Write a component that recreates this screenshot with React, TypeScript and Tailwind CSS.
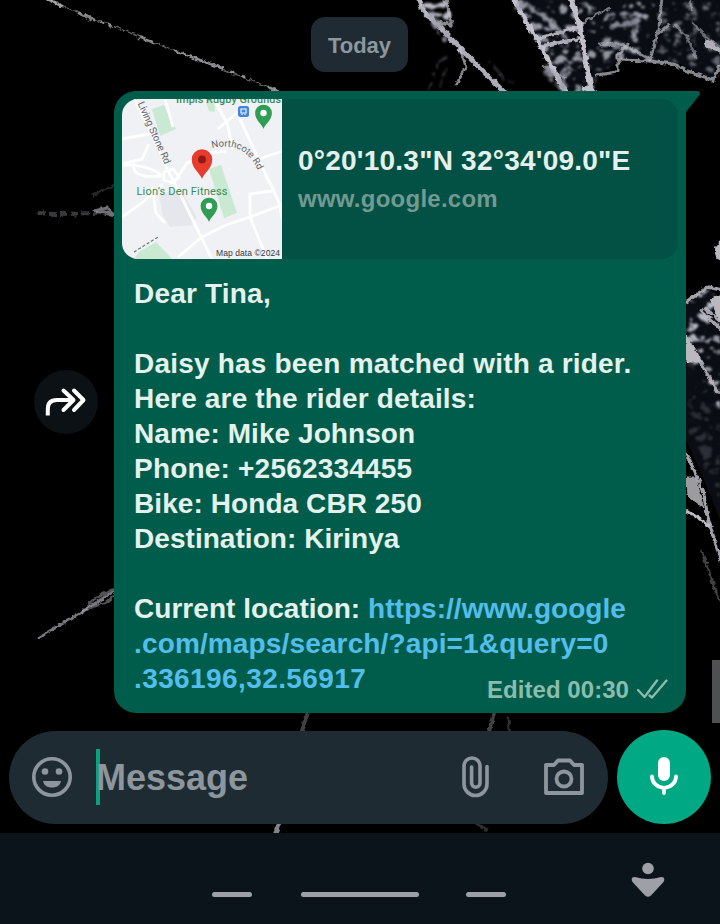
import React from "react";

const FONT = "font-['Liberation_Sans',Arial,sans-serif]";

function Wallpaper() {
  return (
    <svg className="absolute inset-0" width="720" height="833" viewBox="0 0 720 833" fill="none" aria-hidden="true">
      <defs>
        <filter id="rough" x="0" y="0" width="720" height="833" filterUnits="userSpaceOnUse">
          <feTurbulence type="fractalNoise" baseFrequency="0.13" numOctaves="3" seed="8" result="n" />
          <feDisplacementMap in="SourceGraphic" in2="n" scale="9" xChannelSelector="R" yChannelSelector="G" result="d" />
          <feColorMatrix in="n" type="matrix" values="0 0 0 0 1  0 0 0 0 1  0 0 0 0 1  5 4 0 0 -3.6" result="m" />
          <feComposite in="d" in2="m" operator="in" />
          <feGaussianBlur stdDeviation="0.8" />
        </filter>
        <filter id="soft" x="0" y="0" width="720" height="833" filterUnits="userSpaceOnUse">
          <feTurbulence type="fractalNoise" baseFrequency="0.2" numOctaves="2" seed="3" result="n" />
          <feDisplacementMap in="SourceGraphic" in2="n" scale="5" xChannelSelector="R" yChannelSelector="G" />
          <feGaussianBlur stdDeviation="0.75" />
        </filter>
        <filter id="specks" x="0" y="0" width="720" height="833" filterUnits="userSpaceOnUse">
          <feTurbulence type="turbulence" baseFrequency="0.07 0.09" numOctaves="3" seed="21" result="n" />
          <feColorMatrix in="n" type="matrix" values="0 0 0 0 0.48  0 0 0 0 0.49  0 0 0 0 0.56  7 4 0 0 -3.9" result="m" />
          <feComposite in="m" in2="SourceGraphic" operator="in" />
          <feGaussianBlur stdDeviation="0.8" />
        </filter>
      </defs>

      {/* dark glass facets */}
      <g fill="#10141f" opacity="0.65">
        <path d="M510 0H720V68L712 80L680 64L620 59L600 75L590 95L565 91L540 45Z" />
        <path d="M686 304L708 288L720 300V520L700 470L686 440Z" />
      </g>
      <g filter="url(#specks)" fill="#fff">
        <path d="M420 0L452 0L450 32L430 18Z" />
        <path d="M512 0H655L648 60H618L600 75L592 95H565L540 45Z" opacity="0.8" />
        <path d="M660 0H720V76L712 80L680 64L650 60Z" opacity="0.5" />
        <path d="M686 300L712 286L720 310V410L686 350Z" />
        <path d="M688 352L720 410V500L700 460L686 430Z" opacity="0.2" />
      </g>

      {/* hairline crack upper left */}
      <g filter="url(#soft)" stroke="#a3a3a5" strokeLinecap="round">
        <path d="M40 -4L62 6" strokeWidth="2.6" />
        <path d="M62 6L278 91" strokeWidth="1.3" opacity="0.6" />
        <path d="M80 14L94 20M101 22L102 22.4M109 25L111 26M140 38L154 43M175 51L222 68M231 72L233 73M242 76L244 77M270 88L276 90" strokeWidth="2.8" opacity="0.8" />
      </g>

      {/* main cracks */}
      <g filter="url(#soft)" stroke="#c1c0cb" strokeLinecap="round" strokeLinejoin="round">
        <path d="M418 -4L422 9L458 46L486 74L503 91" strokeWidth="5" opacity="0.9" />
        <path d="M420 0L430 20M446 0L452 25L436 22" strokeWidth="3.4" opacity="0.7" />
        <path d="M460 49L466 67L456 85" strokeWidth="2.6" opacity="0.7" />
        <path d="M512 -3L539 43L565 91" strokeWidth="4.8" />
        <path d="M570 -3L580 26L592 95" strokeWidth="5" />
        <path d="M541 46L578 39M540 38L582 26" strokeWidth="3.5" opacity="0.9" />
        <path d="M577 30L588 19M588 19L610 8M545 67L565 78" strokeWidth="2.4" opacity="0.6" />
        <path d="M586 88L595 94" strokeWidth="6" />
        <path d="M662 -3L659 27L650 60L622 44L600 45M660 32L669 24" strokeWidth="3" opacity="0.65" />
        <path d="M597 75L618 72V54L628 44M620 60L650 61L674 64L682 69L713 80L720 66" strokeWidth="3" opacity="0.7" />
        <path d="M691 0V10M692 22L709 40L720 47M675 25L688 38L696 58" strokeWidth="2.6" opacity="0.5" />
        <path d="M707 43L720 51" strokeWidth="6" opacity="0.9" />
      </g>
      <g filter="url(#rough)" stroke="#9b9daa" opacity="0.85">
        <path d="M515 6Q545 5 570 45M605 17Q628 10 648 18M610 25Q630 27 640 20M604 45L628 47" strokeWidth="5" />
        <path d="M426 8L448 40M542 66L565 90M570 62L560 88" strokeWidth="7" />
        <path d="M430 90Q434 64 448 57M442 90Q440 75 448 69M490 62Q500 78 514 84" strokeWidth="2" opacity="0.5" />
      </g>

      {/* shards along both edges */}
      <g filter="url(#soft)" stroke="#bdbbc4" strokeLinejoin="round">
        <path d="M722 240Q712 247 717 258L722 261" fill="#bab9be" />
        <path d="M686 302L708 287L722 290V323L704 307M686 346L700 361L718 394M700 310L722 330" strokeWidth="3.4" opacity="0.85" />
        <path d="M686 336L698 354L700 362H686ZM710 300L722 295V324Z" fill="#bbb9bf" />
        <path d="M686 453L703 490L708 518L721 562" strokeWidth="3.2" opacity="0.85" />
        <path d="M686 478L696 478L704 509L687 496Z" fill="#b8b7bb" opacity="0.85" />
        <path d="M686 510L710 526" strokeWidth="2.8" />
        <path d="M701 550L720 602" strokeWidth="2.5" opacity="0.35" />
        <path d="M38 638L82 612L114 591" strokeWidth="3" stroke="#77777d" />
        <path d="M82 612L94 599L108 592L114 588M90 608L107 602L114 596" strokeWidth="2.6" opacity="0.45" />
        <path d="M38 213L55 214L98 213" strokeWidth="4" opacity="0.3" strokeDasharray="7 4" />
        <path d="M94 211L107 208L115 215L105 213Z" strokeWidth="3" opacity="0.6" />
        <path d="M92 196L114 185" strokeWidth="3" opacity="0.2" />
        <path d="M308 712L301 734M494 712L489 732" strokeWidth="4" opacity="0.35" />
        <path d="M281 820L274 836" strokeWidth="4.5" opacity="0.7" />
        <path d="M508 718L509 730M476 824L488 830" strokeWidth="3" opacity="0.25" />
      </g>
    </svg>
  );
}

function MapPin({ x, y, s, fill, dot }: { x: number; y: number; s: number; fill: string; dot: string }) {
  return (
    <g transform={`translate(${x} ${y}) scale(${s})`}>
      <path d="M0 0C-1-5-10-10-10-19A10 10 0 0 1 10-19C10-10 1-5 0 0Z" fill={fill} />
      <circle cx="0" cy="-19" r="3.8" fill={dot} />
    </g>
  );
}

function MapThumb() {
  return (
    <svg className="block h-[160px] w-[160px] shrink-0" viewBox="0 0 160 160" fontFamily="Roboto, sans-serif" fontWeight="400">
      <rect width="160" height="160" fill="#f0f1f4" />
      <path d="M37 97L58 89L75 118L70 126L48 128L41 117Z" fill="#e6e7ed" />
      <g fill="#c9e9d2">
        <path d="M30 10L42 6L54 30L38 37Z" />
        <path d="M84 3L92 1L93 13L87 12Z" />
        <path d="M87 70L99 66L115 114L102 119Z" />
        <path d="M12 160L17 153L34 143L50 160Z" />
      </g>
      <g stroke="#fff" fill="none" strokeWidth="2.8">
        <path d="M12 0L30 34L45 70L52 83L90 160" />
        <path d="M0 40L32 34M0 65L20 60L27 45M0 66Q24 65 40 76M0 118L20 104L41 85M30 88L34 114L43 124M12 64Q8 80 40 77M55 79L65 64L88 54L104 52" />
        <path d="M43 0L51 28M92 0L105 24L111 50M96 30L115 14L160 110M137 60L160 52M143 75L149 86L157 103L160 120M150 92L128 95V118L145 160M128 118L104 126L80 138L56 158M128 118L160 106" />
        <path d="M42 73L51 70L57 78L51 84L42 81Z" />
      </g>
      <path d="M12 153L36 138" stroke="#5e7f72" strokeWidth="1.2" strokeDasharray="3 2" />
      <text x="54" y="4" fontSize="10.800" fontWeight="500" textLength="105" fill="#388c58">Impis Rugby Grounds</text>
      <text transform="translate(15.500 4.500) rotate(66)" fontSize="10" textLength="67" fill="#5f646a">Living Stone Rd</text>
      <path id="northcote" d="M90 49Q124 41 137 74" fill="none" />
      <text fontSize="9.5" fill="#5f646a"><textPath href="#northcote">Northcote Rd</textPath></text>
      <text x="14.500" y="96" fontSize="11" textLength="91" fill="#388c58">Lion’s Den Fitness</text>
      <rect x="116" y="7" width="11" height="11" rx="2.500" fill="#4285df" />
      <path d="M119 10H124V14H119ZM120 15V16M123 15V16" stroke="#fff" fill="none" strokeWidth="1.1" />
      <MapPin x={80} y={80} s={1.03} fill="#e83b2e" dot="#8c1a17" />
      <MapPin x={87} y={123} s={0.84} fill="#2f9e54" dot="#fff" />
      <MapPin x={141.5} y={30} s={0.84} fill="#2f9e54" dot="#fff" />
      <text x="94" y="157" fontSize="8.5" textLength="64" fill="#34383b" fontFamily="Liberation Sans, sans-serif">Map data ©2024</text>
    </svg>
  );
}

function Preview() {
  return (
    <div className="flex h-[160px] overflow-hidden rounded-[16px] bg-[#035044]">
      <MapThumb />
      <div className="flex flex-col pt-[44px] pl-4 whitespace-nowrap">
        <span className="text-[28px] leading-[36px] tracking-[0.23px] text-[#e5f0ec]">0°20'10.3"N 32°34'09.0"E</span>
        <span className="pt-[3px] text-[24px] leading-[34px] tracking-[0.25px] text-[#729a93]">www.google.com</span>
      </div>
    </div>
  );
}

const LINES: { t: string; c: string }[] = [
  { t: "Dear Tina,", c: "tracking-[0.2px]" },
  { t: "", c: "" },
  { t: "Daisy has been matched with a rider.", c: "tracking-[0.2px]" },
  { t: "Here are the rider details:", c: "tracking-[0.16px]" },
  { t: "Name: Mike Johnson", c: "tracking-[0.06px]" },
  { t: "Phone: +2562334455", c: "tracking-[0.2px]" },
  { t: "Bike: Honda CBR 250", c: "tracking-[0.08px]" },
  { t: "Destination: Kirinya", c: "tracking-[0.05px]" },
  { t: "", c: "" },
];

function Bubble() {
  return (
    <div className="relative mt-[19px] ml-[114px] h-[622px] w-[572px] rounded-[22px] rounded-tr-none bg-[#005d4b] p-2">
      <svg className="absolute top-0 left-[571px]" width="16" height="24" viewBox="0 0 16 24">
        <path d="M0 0H13Q16 1 14.500 4L1 21H0Z" fill="#005d4b" />
      </svg>
      <Preview />
      <div className="px-3 pt-[17px] text-[28px] leading-[35px] whitespace-nowrap text-[#e4f1ec]">
        {LINES.map((l, i) => (
          <p key={i} className={`h-[35px] ${l.c}`}>{l.t}</p>
        ))}
        <p className="h-[35px] tracking-[0.04px]">Current location: <span className="text-[#53bdeb]">https://www.google</span></p>
        <p className="h-[35px] tracking-[0.14px] text-[#53bdeb]">.com/maps/search/?api=1&amp;query=0</p>
        <p className="h-[35px] tracking-[0.4px] text-[#53bdeb]">.336196,32.56917</p>
      </div>
      <div className="absolute right-[17px] bottom-[9px] flex items-center gap-2 text-[24px] leading-[28px] text-[#8bbcad]">
        <span className="whitespace-nowrap tracking-[0.05px]">Edited 00:30</span>
        <svg width="32" height="22" viewBox="0 0 32 22" fill="none" stroke="currentColor" strokeWidth="2.3" strokeLinecap="round" strokeLinejoin="round">
          <path d="M1 11L7.500 18L20 1.500M12.500 16.500L15 18.500L29.500 1.500" />
        </svg>
      </div>
    </div>
  );
}

function Composer() {
  return (
    <div className="mt-[17px] flex h-[94px] items-center pl-[9px]">
      <div className="flex h-[93px] w-[599px] items-center rounded-full bg-[#1f2b33] text-[#8c969c]">
        <svg className="ml-[23px] shrink-0" width="40" height="40" viewBox="0 0 40 40">
          <circle cx="20" cy="20" r="18.200" fill="none" stroke="currentColor" strokeWidth="3.6" />
          <circle cx="13" cy="14.500" r="3.300" fill="currentColor" />
          <circle cx="27" cy="14.500" r="3.300" fill="currentColor" />
          <path d="M11 24H29C28 28.500 25 30.500 20 30.500S12 28.500 11 24Z" fill="currentColor" />
        </svg>
        <div className="ml-[24px] h-[56px] w-[4px] bg-[#0aa17f]" />
        <span className="-ml-[4px] w-[366px] pt-[2px] text-[36px] leading-[56px]">Message</span>
        <svg className="shrink-0" width="27" height="42" viewBox="0 0 27 42" fill="none" stroke="currentColor" strokeWidth="3.6" strokeLinecap="round">
          <path d="M25 10.500V28A11.500 11.500 0 0 1 2 28V10A8 8 0 0 1 18 10V27A4.200 4.200 0 0 1 9.600 27V11" />
        </svg>
        <svg className="ml-[54px] shrink-0" width="42" height="38" viewBox="0 0 42 38" fill="none" stroke="currentColor" strokeWidth="3.8" strokeLinejoin="round">
          <path d="M3 7H11L15 2.500H27L31 7H39V35H3Z" />
          <circle cx="21" cy="21" r="7.500" />
        </svg>
      </div>
      <div className="ml-[9px] flex h-[94px] w-[94px] items-center justify-center rounded-full bg-[#00a884]">
        <svg width="28" height="40" viewBox="0 0 28 40">
          <rect x="8" y="0" width="12" height="24" rx="6" fill="#fff" />
          <path d="M2 19.500A12 11.300 0 0 0 26 19.500M14 31V36" fill="none" stroke="#fff" strokeWidth="3.8" strokeLinecap="round" />
        </svg>
      </div>
    </div>
  );
}

export default function App() {
  return (
    <div className={`relative h-[924px] w-[720px] overflow-hidden bg-black font-bold ${FONT}`}>
      <Wallpaper />
      <main className="relative h-[833px] pt-[17px]">
        <div className="ml-[311px] flex h-[55px] w-[97px] items-center justify-center rounded-[14px] bg-[#1f2a32] pt-[2px] text-[22px] text-[#8d979e]">Today</div>
        <Bubble />
        <button className="absolute top-[370px] left-[34px] flex h-[64px] w-[64px] items-center justify-center rounded-full bg-[#0b1115]" aria-label="Forward">
          <svg width="42" height="32" viewBox="0 0 42 32" fill="none" stroke="#fff" strokeWidth="4" strokeLinejoin="round">
            <path d="M2.800 29.500V23C2.800 16.500 6 14 12 14H28" />
            <path d="M18.500 4.500L28.500 14L18.500 24M29 4.500L38.500 14L29 24" strokeLinecap="round" />
          </svg>
        </button>
        <div className="absolute top-[660px] right-0 h-[63px] w-[8px] bg-[#4e5052]" />
        <Composer />
      </main>
      <nav className="relative flex h-[91px] bg-[#0b141b] text-[#9da0a7]">
        <div className="mt-[59px] ml-[212px] flex">
          <div className="h-[5px] w-[40px] rounded-full bg-[#9da0a7]" />
          <div className="ml-[49px] h-[5px] w-[118px] rounded-full bg-[#9da0a7]" />
          <div className="ml-[47px] h-[5px] w-[40px] rounded-full bg-[#9da0a7]" />
        </div>
        <svg className="mt-[29px] ml-[123px]" width="36" height="36" viewBox="0 0 36 36" fill="currentColor">
          <circle cx="19" cy="6.500" r="5.800" />
          <path d="M6 15Q19 19 32 15Q37 15 34.500 20L22 33.500Q19 36 16 33.500L3.500 20Q1 15 6 15Z" />
        </svg>
      </nav>
    </div>
  );
}
